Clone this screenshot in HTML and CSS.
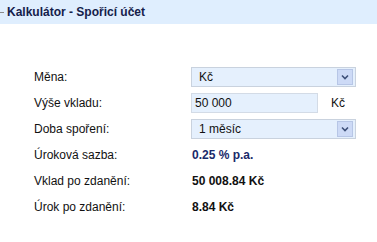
FILE: index.html
```html
<!DOCTYPE html>
<html lang="cs">
  <head>
    <meta charset="UTF-8" />
    <title>Kalkulátor - Spořicí účet</title>
    <link rel="stylesheet" href="styles.css">
  </head>
  <body>
    <div class="title-bar">
      <span class="title-dash"></span>
      <h1 class="title">Kalkulátor - Spořicí účet</h1>
    </div>
    <div class="calc">
      <div class="row">
        <label class="label">Měna:</label>
        <div class="select wide"><span>Kč</span><i class="arrow"></i></div>
      </div>
      <div class="row">
        <label class="label">Výše vkladu:</label>
        <div class="field">
          <input class="input" value="50 000">
          <span class="unit">Kč</span>
        </div>
      </div>
      <div class="row">
        <label class="label">Doba spoření:</label>
        <div class="select wide"><span>1 měsíc</span><i class="arrow"></i></div>
      </div>
      <div class="row">
        <span class="label">Úroková sazba:</span>
        <span class="value rate">0.25 % p.a.</span>
      </div>
      <div class="row">
        <span class="label">Vklad po zdanění:</span>
        <span class="value">50 008.84 Kč</span>
      </div>
      <div class="row">
        <span class="label">Úrok po zdanění:</span>
        <span class="value">8.84 Kč</span>
      </div>
    </div>
  </body>
</html>
```
FILE: styles.css
```css
* {
  box-sizing: border-box;
}
body {
  margin: 0;
  font-family: "Liberation Sans", Arial, sans-serif;
  font-size: 12px;
  color: #111;
  background: #fff;
}
.title-bar {
  display: flex;
  align-items: center;
  height: 24px;
  background: #dfeefe;
}
.title-dash {
  width: 4px;
  height: 1px;
  background: #8a8a8a;
  margin-right: 3px;
}
.title {
  margin: 0;
  font-size: 12px;
  font-weight: bold;
  color: #14204a;
}
.calc {
  padding: 40px 0 0 34px;
}
.row {
  display: grid;
  grid-template-columns: 157px auto;
  align-items: center;
  height: 26px;
}
.label {
  font-size: 12px;
}
.select {
  display: flex;
  align-items: center;
  justify-content: space-between;
  width: 165px;
  height: 20px;
  padding: 0 2px 0 7px;
  background: #e5f0fd;
  border: 1px solid #c9d2de;
}
.arrow {
  display: block;
  width: 16px;
  height: 16px;
  background: #cddaf6 url("data:image/svg+xml;utf8,<svg xmlns='http://www.w3.org/2000/svg' width='16' height='16'><path d='M5 6.5l3 3 3-3' fill='none' stroke='%233d4f78' stroke-width='1.6'/></svg>") no-repeat center;
  border: 1px solid #b7c6e6;
}
.field {
  display: flex;
  align-items: center;
}
.input {
  width: 127px;
  height: 20px;
  margin: 0;
  padding: 0 3px;
  font: 12px "Liberation Sans", Arial, sans-serif;
  color: #111;
  background: #e5f0fd;
  border: 1px solid #d3dbe6;
  outline: none;
}
.unit {
  margin-left: 13px;
}
.value {
  padding-left: 1px;
  font-weight: bold;
}
.rate {
  color: #1a2a6a;
}
```
